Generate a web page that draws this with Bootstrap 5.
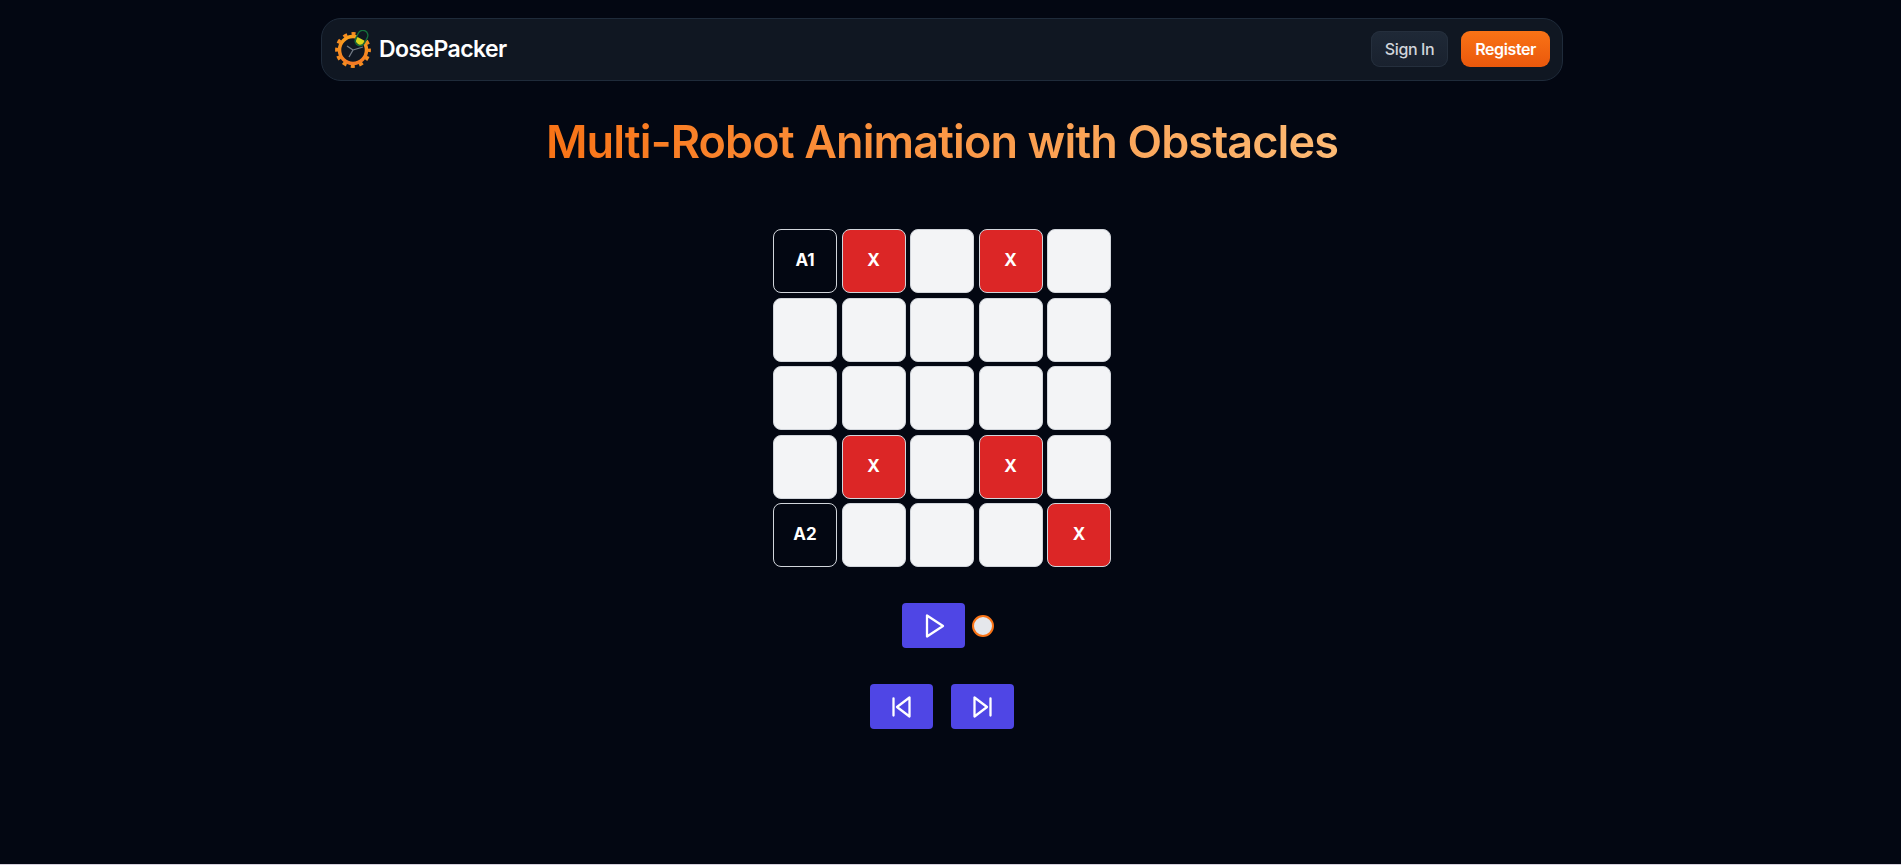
<!DOCTYPE html>
<html lang="en">
<head>
<meta charset="utf-8">
<meta name="viewport" content="width=device-width, initial-scale=1">
<title>DosePacker</title>
<link href="https://cdn.jsdelivr.net/npm/bootstrap@5.3.0/dist/css/bootstrap.min.css" rel="stylesheet">
<style>
body{background:#030712;color:#e5e7eb;font-family:Inter,sans-serif;min-height:100vh;padding-right:17px;border-bottom:1px solid #d5d0dc}
.shell{max-width:1242px;width:100%}
.topbar{margin-top:18px;height:63px;padding:0 12px 2px;background:#101722;border:1px solid #1f2b3a;border-radius:20px}
.brand{color:#fff;font-size:23px;line-height:32px;font-weight:600;letter-spacing:-.025em}
.logo{width:36px;height:38px;margin-left:1px}
.acts{gap:13px}
.act{height:36px;padding:0 14px;border:0;border-radius:9px;font-size:16px;line-height:24px;font-weight:500;letter-spacing:-.025em}
.signin,.signin:hover{color:#d1d5db;background:linear-gradient(#1f2937,#19212e);box-shadow:inset 0 0 0 1px #252f3d}
.register,.register:hover{color:#fff;font-weight:600;background:linear-gradient(#f97316,#ea580c)}
.headline{font-size:45px;line-height:58px;font-weight:600;margin:32px 0 58px;letter-spacing:-.02em;background:linear-gradient(90deg,#f97316,#fdba74);-webkit-background-clip:text;background-clip:text;color:transparent}
.board{width:338px;height:338px}
.tile{width:64px;height:64px;padding-bottom:2px;border:1px solid #d1d5db;border-radius:8px;background:#f3f4f6;color:#fff;font-size:17px;line-height:24px;font-weight:700}
.block{background:#dc2626}
.robot{background:transparent}
.ctl,.ctl:hover{width:63px;height:45px;border:0;border-radius:4px;background:#4f46e5;color:#fff}
.ctl svg{width:26px;height:26px;fill:none;stroke:currentColor;stroke-width:2.3;stroke-linecap:round;stroke-linejoin:round}
.knob{appearance:none;width:22px;height:22px;margin:0;border:2px solid #f97316;border-radius:50%;background:#e5e7eb}
.playrow{margin-top:36px;padding-left:12px;gap:7px}
.steprow{margin-top:36px;gap:18px}
</style>
</head>
<body class="d-flex flex-column align-items-center">
<header class="shell">
<nav class="topbar d-flex align-items-center justify-content-between">
<a href="#" class="brand d-flex align-items-center text-decoration-none">
<svg class="logo me-2" viewBox="0 0 36 38" fill="none" aria-hidden="true">
<defs><linearGradient id="gearfill" x2="0" y2="1"><stop stop-color="#f9a01d"/><stop offset="1" stop-color="#f47a24"/></linearGradient></defs>
<circle cx="18" cy="20" r="13.500" stroke="url(#gearfill)" stroke-width="3.500"/>
<circle cx="18" cy="20" r="16.300" stroke="#f58c20" stroke-width="3.200" stroke-dasharray="4.100 4.435" stroke-dashoffset="2"/>
<path d="M18 20 12 16M18 20l10-3M18 20l-4 7" stroke="#737b86" stroke-width="1.300"/>
<g transform="rotate(27 26.500 8)"><rect x="21.500" y="0" width="10" height="16" rx="5" fill="#101722" stroke="#15713c" stroke-width="1.300"/><path d="M22.500 9h8v2a4 4 0 0 1-8 0z" fill="#d5d71c"/></g>
</svg>DosePacker</a>
<div class="acts d-flex">
<button type="button" class="btn act signin">Sign In</button>
<button type="button" class="btn act register">Register</button>
</div>
</nav>
</header>
<main class="d-flex flex-column align-items-center">
<h1 class="headline text-center">Multi-Robot Animation with Obstacles</h1>
<div class="board d-flex flex-column justify-content-between">
<div class="d-flex justify-content-between"><div class="tile robot d-flex align-items-center justify-content-center">A1</div><div class="tile block d-flex align-items-center justify-content-center">X</div><div class="tile"></div><div class="tile block d-flex align-items-center justify-content-center">X</div><div class="tile"></div></div>
<div class="d-flex justify-content-between"><div class="tile"></div><div class="tile"></div><div class="tile"></div><div class="tile"></div><div class="tile"></div></div>
<div class="d-flex justify-content-between"><div class="tile"></div><div class="tile"></div><div class="tile"></div><div class="tile"></div><div class="tile"></div></div>
<div class="d-flex justify-content-between"><div class="tile"></div><div class="tile block d-flex align-items-center justify-content-center">X</div><div class="tile"></div><div class="tile block d-flex align-items-center justify-content-center">X</div><div class="tile"></div></div>
<div class="d-flex justify-content-between"><div class="tile robot d-flex align-items-center justify-content-center">A2</div><div class="tile"></div><div class="tile"></div><div class="tile"></div><div class="tile block d-flex align-items-center justify-content-center">X</div></div>
</div>
<div class="playrow d-flex align-items-center">
<button type="button" class="ctl d-flex align-items-center justify-content-center p-0" aria-label="Play"><svg viewBox="0 0 26 26"><path d="M6 2.500V23.500L22 13Z"/></svg></button>
<input type="radio" class="knob" aria-label="Speed">
</div>
<div class="steprow d-flex">
<button type="button" class="ctl d-flex align-items-center justify-content-center p-0" aria-label="Previous"><svg viewBox="0 0 26 26"><path d="M4.500 4.500V21.500M20.500 3.500V22.500L8 13Z"/></svg></button>
<button type="button" class="ctl d-flex align-items-center justify-content-center p-0" aria-label="Next"><svg viewBox="0 0 26 26"><path d="M20.500 4.500V21.500M4.500 3.500V22.500L17 13Z"/></svg></button>
</div>
</main>
<script src="https://cdn.jsdelivr.net/npm/bootstrap@5.3.0/dist/js/bootstrap.bundle.min.js"></script>
</body>
</html>
